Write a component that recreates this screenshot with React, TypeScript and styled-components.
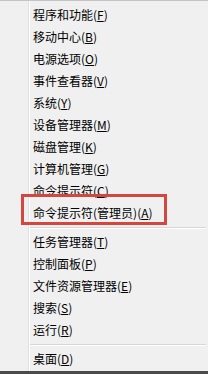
import React from "react";
import styled, { createGlobalStyle } from "styled-components";

const Global = createGlobalStyle`
  html, body { margin: 0; padding: 0; background: #f0f0f0; }
  #root { width: 208px; height: 374px; }
`;

const Menu = styled.div`
  width: 208px;
  height: 374px;
  box-sizing: border-box;
  background: #f0f0f0;
  border-top: 1px solid #c4c4c4;
  border-bottom: 3px solid #4a4a4a;
  display: flex;
  overflow: hidden;
  font-family: "Noto Sans CJK SC", "Noto Sans", sans-serif;
  font-size: 12px;
  color: #000;
`;

const Gutter = styled.div`
  width: 28px;
  flex: none;
  border-right: 1px solid #e1e1e1;
  box-shadow: 1px 0 0 #ffffff;
`;

const List = styled.div`
  flex: 1;
  display: flex;
  flex-direction: column;
  padding: 3px 0 0 0;
`;

const Item = styled.div`
  position: relative;
  height: 22px;
  line-height: 22px;
  padding-left: 4px;
  white-space: nowrap;
  u { text-decoration: underline; text-underline-offset: 1px; }
`;

const Highlight = styled.div`
  position: absolute;
  left: -8px;
  top: -8px;
  width: 146px;
  height: 31px;
  box-sizing: border-box;
  border: 3px solid #d4473f;
  pointer-events: none;
`;

const Separator = styled.div`
  height: 7px;
  display: flex;
  align-items: center;
  margin: 0 2px 0 1px;
  &::before {
    content: "";
    flex: 1;
    height: 1px;
    background: #d6d6d6;
    box-shadow: 0 1px 0 #ffffff;
  }
`;

type Entry = { label: string; key: string; highlight?: boolean } | "sep";

const entries: Entry[] = [
  { label: "程序和功能", key: "F" },
  { label: "移动中心", key: "B" },
  { label: "电源选项", key: "O" },
  { label: "事件查看器", key: "V" },
  { label: "系统", key: "Y" },
  { label: "设备管理器", key: "M" },
  { label: "磁盘管理", key: "K" },
  { label: "计算机管理", key: "G" },
  { label: "命令提示符", key: "C" },
  { label: "命令提示符(管理员)", key: "A", highlight: true },
  "sep",
  { label: "任务管理器", key: "T" },
  { label: "控制面板", key: "P" },
  { label: "文件资源管理器", key: "E" },
  { label: "搜索", key: "S" },
  { label: "运行", key: "R" },
  "sep",
  { label: "桌面", key: "D" },
];

export default function App() {
  return (
    <>
      <Global />
      <Menu>
        <Gutter />
        <List>
          {entries.map((e, i) =>
            e === "sep" ? (
              <Separator key={i} />
            ) : (
              <Item key={i}>
                {e.label}(<u>{e.key}</u>)
                {e.highlight && <Highlight />}
              </Item>
            )
          )}
        </List>
      </Menu>
    </>
  );
}
